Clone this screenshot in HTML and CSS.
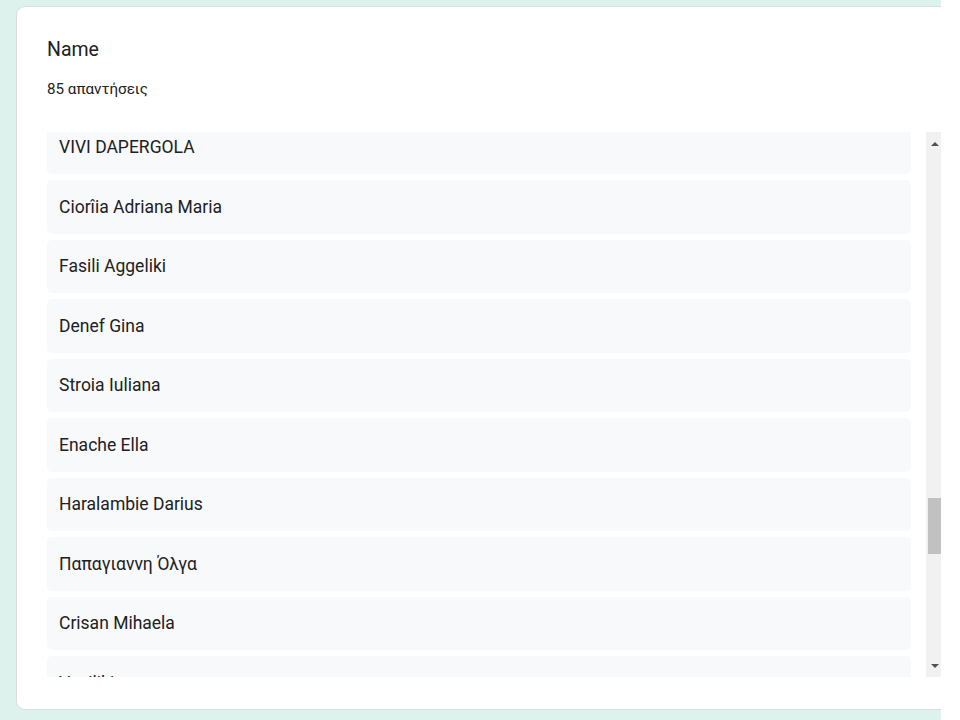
FILE: index.html
```html
<!DOCTYPE html>
<html lang="el">
<head>
<meta charset="utf-8">
<title>Name</title>
<link rel="stylesheet" href="styles.css">
</head>
<body>
<div class="page">
  <section class="card">
    <h2 class="title">Name</h2>
    <div class="count">85 απαντήσεις</div>
    <div class="list">
      <div class="viewport">
        <ul class="items">
          <li class="item">VIVI DAPERGOLA</li>
          <li class="item">Ciorîia Adriana Maria</li>
          <li class="item">Fasili Aggeliki</li>
          <li class="item">Denef Gina</li>
          <li class="item">Stroia Iuliana</li>
          <li class="item">Enache Ella</li>
          <li class="item">Haralambie Darius</li>
          <li class="item">Παπαγιαννη Όλγα</li>
          <li class="item">Crisan Mihaela</li>
          <li class="item">Vasiliki</li>
        </ul>
      </div>
      <div class="scrollbar">
        <div class="arrow arrow-up"></div>
        <div class="thumb"></div>
        <div class="arrow arrow-down"></div>
      </div>
    </div>
  </section>
</div>
</body>
</html>
```

FILE: styles.css
```css
html, body {
  margin: 0;
  padding: 0;
  background: #ffffff;
}

.page {
  width: 941px;
  height: 720px;
  overflow: hidden;
  background: #ddf2ec;
  padding: 6px 0 0 16px;
  box-sizing: border-box;
  font-family: Roboto, "Noto Sans", Arial, sans-serif;
  color: #202124;
}

.card {
  width: 958px;
  height: 704px;
  box-sizing: border-box;
  background: #ffffff;
  border: 1px solid #dadce0;
  border-radius: 9px;
  padding: 31px 30px 0 30px;
}

.title {
  margin: 0;
  font-size: 19.5px;
  font-weight: 400;
  line-height: 24px;
  letter-spacing: 0;
}

.count {
  margin-top: 17px;
  font-size: 15.2px;
  line-height: 20px;
}

.list {
  margin-top: 33px;
  height: 545px;
  display: flex;
  gap: 15px;
}

.viewport {
  width: 864px;
  height: 545px;
  overflow: hidden;
}

.items {
  list-style: none;
  margin: -11.5px 0 0 0;
  padding: 0;
  display: flex;
  flex-direction: column;
  gap: 6px;
}

.item {
  height: 53.5px;
  box-sizing: border-box;
  background: #f8f9fa;
  border-radius: 5px;
  padding: 0 12px;
  display: flex;
  align-items: center;
  font-size: 17.5px;
  line-height: 24px;
  color: #202124;
  flex-shrink: 0;
}

.scrollbar {
  width: 17px;
  height: 545px;
  background: #f1f1f1;
  display: flex;
  flex-direction: column;
  align-items: center;
  flex-shrink: 0;
}

.arrow {
  width: 0;
  height: 0;
  border-left: 4px solid transparent;
  border-right: 4px solid transparent;
}

.arrow-up {
  margin-top: 10px;
  border-bottom: 4px solid #505050;
}

.thumb {
  margin-top: 352px;
  width: 13px;
  height: 56px;
  background: #c1c1c1;
}

.arrow-down {
  margin-top: auto;
  margin-bottom: 9px;
  border-top: 4px solid #505050;
}
```
